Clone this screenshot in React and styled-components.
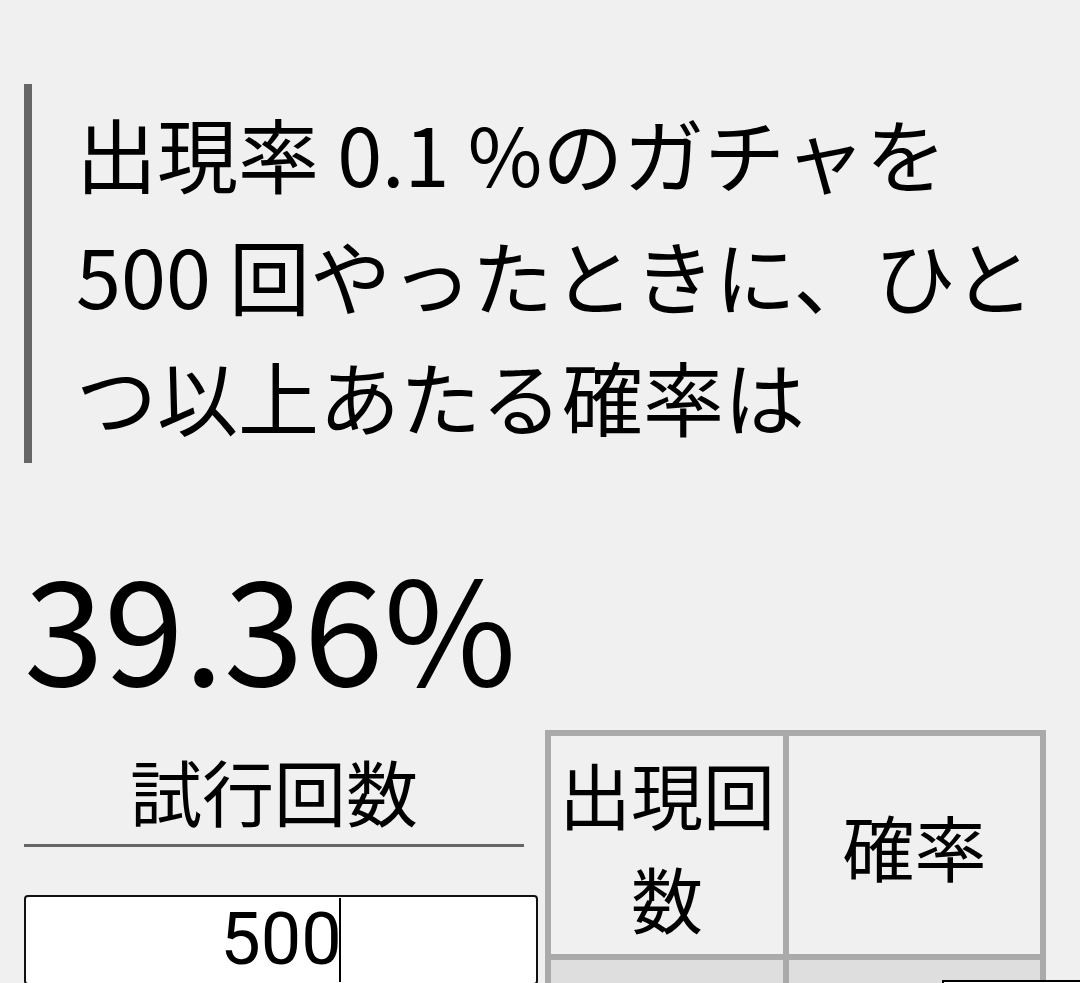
import React from "react";
import styled, { createGlobalStyle } from "styled-components";

const GlobalStyle = createGlobalStyle`
  *, *::before, *::after { box-sizing: border-box; }
  html, body {
    margin: 0;
    padding: 0;
    overflow: hidden;
    background: #f0f0f0;
  }
  body {
    font-family: "Noto Sans CJK JP", "Noto Sans", sans-serif;
    color: #000;
  }
`;

const Page = styled.main`
  padding: 84px 24px 0;
`;

const Question = styled.blockquote`
  margin: 0;
  padding: 7px 0 7px 44px;
  border-left: 8px solid #666;
  font-size: 81px;
  line-height: 1.5;
`;

const Result = styled.div`
  margin: 75px 0 22px;
  font-size: 144px;
  line-height: 170px;
`;

const Row = styled.div`
  display: flex;
  align-items: flex-start;
  gap: 21px;
`;

const Field = styled.div`
  width: 500px;
  flex: none;
`;

const Label = styled.div`
  margin-top: 6px;
  font-size: 72px;
  line-height: 108px;
  text-align: center;
  border-bottom: 3px solid #666;
`;

const InputWrap = styled.div`
  position: relative;
  margin-top: 48px;
`;

const NumberInput = styled.input`
  display: block;
  box-sizing: content-box;
  width: 100%;
  padding: 1px 5px;
  border: 2px solid #111;
  border-radius: 4px;
  background: #fff;
  font-family: Roboto, "Noto Sans", sans-serif;
  font-size: 72px;
  line-height: 84px;
  height: 84px;
  text-align: center;
  color: #000;
  outline: none;
`;

const Caret = styled.span`
  position: absolute;
  left: calc(50% + 65px);
  top: 3px;
  width: 2px;
  height: 84px;
  background: #000;
`;

const Table = styled.table`
  flex: none;
  width: 501px;
  table-layout: fixed;
  border-collapse: separate;
  border-spacing: 0;
  border: 3px solid #aaa;
`;

const Head = styled.th`
  width: ${(p) => p.$w || "auto"};
  padding: 5px 8px;
  border: 3px solid #aaa;
  font-weight: normal;
  font-size: 72px;
  line-height: 1.45;
  text-align: center;
  vertical-align: middle;
`;

const Cell = styled.td`
  height: 110px;
  padding: 0;
  border: 3px solid #aaa;
  background: #dedede;
  vertical-align: top;
`;

const CellInput = styled.input`
  display: block;
  width: 300px;
  height: 80px;
  margin: 20px 0 0 153px;
  border: 2px solid #000;
  background: #fff;
`;

export default function App() {
  return (
    <>
      <GlobalStyle />
      <Page>
        <Question>
          出現率 0.1 %のガチャを 500 回やったときに、ひとつ以上あたる確率は
        </Question>
        <Result>39.36%</Result>
        <Row>
          <Field>
            <Label>試行回数</Label>
            <InputWrap>
              <NumberInput type="text" value="500" readOnly />
              <Caret />
            </InputWrap>
          </Field>
          <Table>
            <thead>
              <tr>
                <Head $w="238px">出現回数</Head>
                <Head>確率</Head>
              </tr>
            </thead>
            <tbody>
              <tr>
                <Cell />
                <Cell>
                  <CellInput type="text" readOnly />
                </Cell>
              </tr>
            </tbody>
          </Table>
        </Row>
      </Page>
    </>
  );
}
